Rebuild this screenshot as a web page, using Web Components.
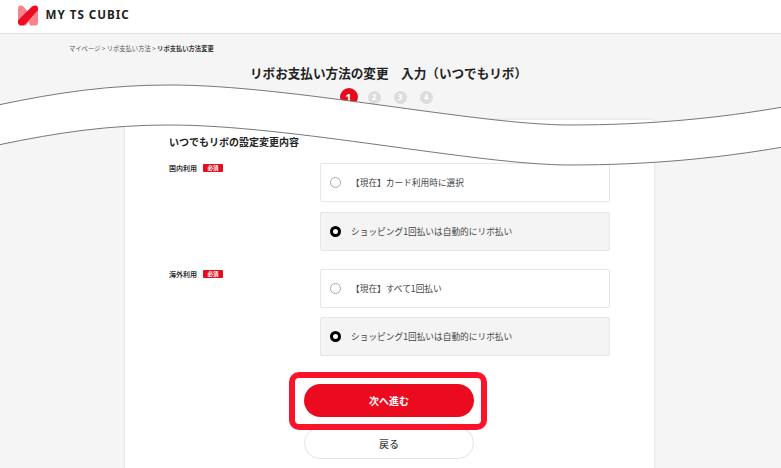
<!DOCTYPE html>
<html lang="ja"><head><meta charset="utf-8"><style>
html,body{margin:0;padding:0;height:468px;overflow:hidden;background:#f5f5f5}
body{position:relative;width:781px;font-family:"Noto Sans CJK JP","Noto Sans",sans-serif;color:#333}
</style></head><body>
<ts-header></ts-header>
<ts-page>
  <ts-crumbs></ts-crumbs>
  <h1 slot="title">リボお支払い方法の変更　入力（いつでもリボ）</h1>
  <ts-steps slot="steps"></ts-steps>
  <ts-card slot="card">
    <ts-field label="国内利用">
      <ts-option>【現在】カード利用時に選択</ts-option>
      <ts-option checked>ショッピング1回払いは自動的にリボ払い</ts-option>
    </ts-field>
    <ts-field label="海外利用">
      <ts-option>【現在】すべて1回払い</ts-option>
      <ts-option checked>ショッピング1回払いは自動的にリボ払い</ts-option>
    </ts-field>
  </ts-card>
</ts-page>
<ts-wave></ts-wave>
<script>
function def(name,html){customElements.define(name,class extends HTMLElement{
  connectedCallback(){if(this.shadowRoot)return;const r=this.attachShadow({mode:'open'});r.innerHTML=typeof html==='function'?html(this):html;}
});}
def('ts-header',`<style>:host{display:flex;align-items:center;height:33px;background:#fff;border-bottom:1px solid #e2e2e2;padding-left:18px}
svg{display:block;flex:none;margin-top:-2px}span{font:700 11.6px/1 "Noto Sans","Open Sans",sans-serif;letter-spacing:1px;color:#222;margin-left:7.5px;margin-top:-3px}</style>
<svg width="20" height="21" viewBox="0 0 20 21"><path d="M0 3Q0 .5 3 .5 5 .5 6 2L14 12 8 20.500H3Q0 20.500 0 18Z" fill="#f7838d"/><path d="M20 3Q20 .5 17 .5 15 .5 14 2L8 10 12 20.500H17Q20 20.500 20 18Z" fill="#f7838d"/><path d="M13.500 2Q15 .5 17 .5 19 .5 20 2.500V5L7 19.500Q6 20.500 4 20.500 1 20.500 0 18V15.500Z" fill="#ee0a1f"/></svg>
<span>MY TS CUBIC</span>`);
def('ts-page',`<style>:host{display:block;padding-top:9px}
.wrap{display:flex;flex-direction:column;align-items:center;padding-right:2px}
.c{display:block;padding-left:69px;height:12px}
::slotted(h1){margin:7px 2px 0 0;font-size:12.6px;line-height:22px;font-weight:700;color:#222;text-align:center}
::slotted(ts-steps){margin:4px 7px 0 0}
::slotted(ts-card){margin-top:14px}
</style><div class="c"><slot></slot></div><div class="wrap"><slot name="title"></slot><slot name="steps"></slot><slot name="card"></slot></div>`);
def('ts-crumbs',`<style>:host{display:block;font-size:6.3px;line-height:12px;color:#555;white-space:nowrap}b{color:#333;font-weight:700}</style>マイページ &gt; リボ支払い方法 &gt; <b>リボ支払い方法変更</b>`);
def('ts-steps',`<style>:host{display:flex;align-items:center;height:18px}
i{display:flex;align-items:center;justify-content:center;border-radius:50%;font:700 8px/1 "Noto Sans",sans-serif;color:#fff;width:13px;height:13px;background:#dcdcdc;margin-left:13px}
i.on{width:18px;height:18px;background:#e60c1e;font-size:11px;margin-left:0;margin-right:-3px}</style><i class="on">1</i><i>2</i><i>3</i><i>4</i>`);
def('ts-card',`<style>:host{display:block;width:529px;height:360px;box-sizing:border-box;background:#fff;border-radius:4px 4px 0 0;box-shadow:0 0 3px rgba(0,0,0,.12);padding:15px 44px 0}
h2{margin:0 0 14px;font-size:10px;line-height:14px;font-weight:700;color:#222}
.f{display:flex;flex-direction:column;gap:18px}
.b{display:flex;flex-direction:column;align-items:center;margin:28px 0 0 -1px;gap:10px}
.hl{position:relative;width:170px;height:33px}
.hl::after{content:"";position:absolute;left:-15px;right:-13px;top:-12px;bottom:-13px;border:6px solid #fb1429;border-radius:10px;box-sizing:border-box}
.btn{display:flex;align-items:center;justify-content:center;width:170px;height:33px;border-radius:17px;font-size:10px;font-weight:700;box-sizing:border-box}
.next{background:#ec0b1e;color:#fff}
.back{background:#fff;border:1px solid #e4e4e4;color:#444;font-weight:500;height:32px}
</style><h2>いつでもリボの設定変更内容</h2><div class="f"><slot></slot></div>
<div class="b"><div class="hl"><div class="btn next">次へ進む</div></div><div class="btn back">戻る</div></div>`);
def('ts-field',e=>`<style>:host{display:flex;align-items:flex-start;width:441px}
.l{width:151px;flex:none;display:flex;align-items:center;gap:6px;font-size:7px;font-weight:700;color:#333;line-height:10px}
.r{background:#e60c1e;color:#fff;font-size:5.5px;line-height:8px;width:20px;height:8px;border-radius:1px;white-space:nowrap;display:flex;align-items:center;justify-content:center}
.o{width:290px;display:flex;flex-direction:column;gap:9.5px}</style>
<div class="l">${e.getAttribute('label')}<span class="r">必須</span></div><div class="o"><slot></slot></div>`);
def('ts-option',`<style>:host{display:flex;align-items:center;height:39px;box-sizing:border-box;border:1px solid #e6e6e6;border-radius:2px;background:#fff;padding-left:9px;font-size:8.7px;color:#444;white-space:nowrap}
:host([checked]){background:#f4f4f4}
.d{width:11px;height:11px;border-radius:50%;border:1px solid #aaa;box-sizing:border-box;background:#fff;margin-right:10px;flex:none}
:host([checked]) .d{border:3.5px solid #000}</style><span class="d"></span><slot></slot>`);
def('ts-wave',`<style>:host{display:block;position:absolute;left:0;top:0;width:781px;height:468px;pointer-events:none}svg{display:block}</style>
<svg width="781" height="468" viewBox="0 0 781 468">
<path d="M-2 105C60 92 110 85 170 85C290 85 477 125 570 125C650 125 720 118 783 107V147C720 158 650 165 570 165C477 165 290 125 170 125C110 125 60 132 -2 145Z" fill="#fff"/>
<path d="M-2 105C60 92 110 85 170 85C290 85 477 125 570 125C650 125 720 118 783 107" fill="none" stroke="#777" stroke-width="1"/>
<path d="M-2 145C60 132 110 125 170 125C290 125 477 165 570 165C650 165 720 158 783 147" fill="none" stroke="#777" stroke-width="1"/>
</svg>`);
</script>
</body></html>
